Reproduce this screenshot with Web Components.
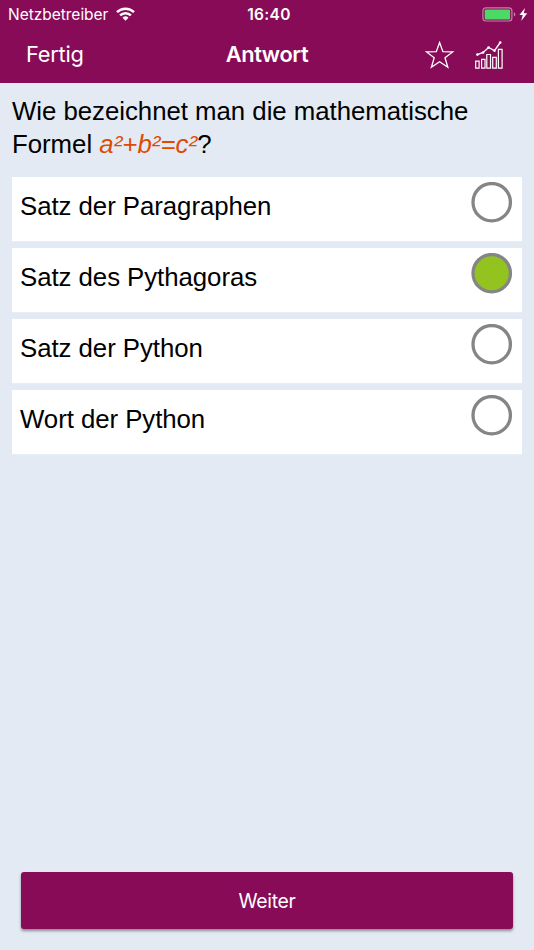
<!DOCTYPE html>
<html lang="de">
<head>
<meta charset="utf-8">
<title>Antwort</title>
<style>
html, body { height: 100%; }
body {
  margin: 0;
  background: #e3eaf3;
  font-family: "Liberation Sans", Arial, sans-serif;
  overflow: hidden;
}
</style>
</head>
<body>
<quiz-screen>
  <status-bar slot="header" carrier="Netzbetreiber" time="16:40"></status-bar>
  <nav-bar slot="header">
    <span slot="back">Fertig</span>
    <span slot="title">Antwort</span>
  </nav-bar>
  <quiz-question>Wie bezeichnet man die mathematische Formel <em>a²+b²=c²</em>?</quiz-question>
  <answer-option>Satz der Paragraphen</answer-option>
  <answer-option checked>Satz des Pythagoras</answer-option>
  <answer-option>Satz der Python</answer-option>
  <answer-option>Wort der Python</answer-option>
  <action-button slot="footer">Weiter</action-button>
</quiz-screen>

<script>
class BaseElement extends HTMLElement {
  constructor() {
    super();
    const template = document.createElement('template');
    template.innerHTML = this.constructor.markup;
    this.attachShadow({ mode: 'open' }).appendChild(template.content.cloneNode(true));
  }
}

class QuizScreen extends BaseElement {
  static markup = `
<style>
:host {
  display: flex;
  flex-direction: column;
  height: 950px;
  --brand: #880b57;
  --ui-font: Inter, "Liberation Sans", sans-serif;
}
header {
  height: 82.6px;
  background: var(--brand);
  color: #fff;
}
main {
  flex: 1;
  display: flex;
  flex-direction: column;
  gap: 7px;
  padding: 12.4px 12px 0;
}
footer { padding: 0 21px 21px; }
</style>
<header><slot name="header"></slot></header>
<main><slot></slot></main>
<footer><slot name="footer"></slot></footer>
`;
}

class StatusBar extends BaseElement {
  static markup = `
<style>
:host {
  display: grid;
  grid-template-columns: 1fr auto 1fr;
  align-items: center;
  height: 26px;
  padding: 0 6px 0 8px;
  font: 15.5px/26px var(--ui-font);
}
.left, .right { display: flex; align-items: center; }
.left { gap: 8px; }
.right { justify-content: flex-end; }
.carrier { padding-top: 2px; letter-spacing: -0.02px; }
.time { padding: 2px 0 0 2px; font-weight: 600; letter-spacing: 0.3px; }
svg { display: block; }
</style>
<div class="left">
  <span class="carrier"></span>
  <svg width="19" height="14" viewBox="0 0 19 14">
    <g fill="none" stroke="#fff" stroke-width="2.5">
      <path d="M1 5.1a12.2 12.2 0 0 1 17 0"/>
      <path d="M4.1 8.4a7.7 7.7 0 0 1 10.8 0"/>
    </g>
    <path fill="#fff" d="M6.5 10.7a4.3 4.3 0 0 1 6 0l-3 3.1z"/>
  </svg>
</div>
<span class="time"></span>
<div class="right">
  <svg width="46" height="15" viewBox="0 0 46 15">
    <rect x=".9" y=".8" width="29" height="13.2" rx="3" fill="none" stroke="#c382aa" stroke-width="1.2"/>
    <rect x="2.7" y="2.4" width="25.4" height="10" rx="1.2" fill="#4cd964"/>
    <path d="M31.8 5.3c2.1.6 2.1 3.6 0 4.2z" fill="#c382aa"/>
    <path d="M43 1 37.4 8.1h3.3l-1.5 6 6.1-7.8h-3.5z" fill="#fff"/>
  </svg>
</div>
`;

  connectedCallback() {
    this.shadowRoot.querySelector('.carrier').textContent = this.getAttribute('carrier');
    this.shadowRoot.querySelector('.time').textContent = this.getAttribute('time');
  }
}

class NavBar extends BaseElement {
  static markup = `
<style>
:host {
  display: grid;
  grid-template-columns: 1fr auto 1fr;
  align-items: center;
  height: 57px;
  padding: 0 30px 0 26px;
  font: 21.8px/57px var(--ui-font);
}
.back, .title { letter-spacing: -0.25px; }
.title { padding-left: 4px; font-weight: 600; letter-spacing: -0.4px; }
.icons {
  display: flex;
  justify-content: flex-end;
  align-items: center;
  gap: 20px;
}
svg { display: block; }
</style>
<div class="back"><slot name="back"></slot></div>
<div class="title"><slot name="title"></slot></div>
<div class="icons">
  <svg width="30" height="28" viewBox="0 0 30 28" fill="none" stroke="#fff" stroke-width="1.3" stroke-linejoin="miter">
    <path d="M14.6 1.5 17.9 10.7 27.7 10.9 20 16.8 22.8 26.3 14.6 20.7 6.4 26.3 9.2 16.8 1.5 10.9 11.3 10.7z"/>
  </svg>
  <svg width="29" height="28" viewBox="0 0 29 28" fill="none" stroke="#fff" stroke-width="1.2">
    <path d="M.7 20.2h3.4v6.9H.7zM6.6 18.3H10v8.8H6.6zM11.8 13.5h3.7v13.6h-3.7zM17.7 16.3h3.6v10.8h-3.6zM23.4 8.3h3.7v18.8h-3.7z"/>
    <path stroke-width="1.4" d="M2.4 13.6 8.1 11.5 13.6 6.5 19.5 9.7 25.2 1.5"/>
    <g fill="#fff" stroke="none">
      <circle cx="2.4" cy="13.6" r="1.3"/>
      <circle cx="8.1" cy="11.5" r="1.2"/>
      <circle cx="13.6" cy="6.5" r="1.3"/>
      <circle cx="19.5" cy="9.7" r="1.2"/>
      <circle cx="25.2" cy="1.5" r="1.3"/>
    </g>
  </svg>
</div>
`;
}

class QuizQuestion extends BaseElement {
  static markup = `
<style>
:host {
  display: block;
  height: 75px;
  font-size: 25.8px;
  line-height: 33px;
  letter-spacing: -0.03px;
  color: #000;
}
::slotted(em) { color: #e04a00; letter-spacing: 0.05px; }
</style>
<slot></slot>
`;
}

class AnswerOption extends BaseElement {
  static markup = `
<style>
:host {
  display: flex;
  justify-content: space-between;
  align-items: flex-start;
  box-sizing: border-box;
  height: 64px;
  padding: 5px 10px 0 8px;
  background: #fff;
  box-shadow: 0 .4px #f1f5f9;
  color: #000;
  font-size: 25.8px;
  line-height: 49px;
  letter-spacing: -0.05px;
}
svg { display: block; }
circle {
  fill: #fff;
  stroke: #858585;
  stroke-width: 3.3px;
}
:host([checked]) circle { fill: #93c31f; }
</style>
<span><slot></slot></span>
<svg width="41" height="41" viewBox="0 0 41 41"><circle cx="20.7" cy="20.2" r="18.7"/></svg>
`;
}

class ActionButton extends BaseElement {
  static markup = `
<style>
:host { display: block; }
button {
  display: block;
  width: 100%;
  height: 57px;
  margin: 0;
  padding: 1px 0 0;
  border: 0;
  border-radius: 3px;
  background: var(--brand);
  box-shadow: 0 2px 3px rgba(0, 0, 0, .4);
  color: #fff;
  font: 19.4px/56px var(--ui-font);
  letter-spacing: -0.3px;
}
</style>
<button><slot></slot></button>
`;
}

customElements.define('quiz-screen', QuizScreen);
customElements.define('status-bar', StatusBar);
customElements.define('nav-bar', NavBar);
customElements.define('quiz-question', QuizQuestion);
customElements.define('answer-option', AnswerOption);
customElements.define('action-button', ActionButton);
</script>
</body>
</html>
